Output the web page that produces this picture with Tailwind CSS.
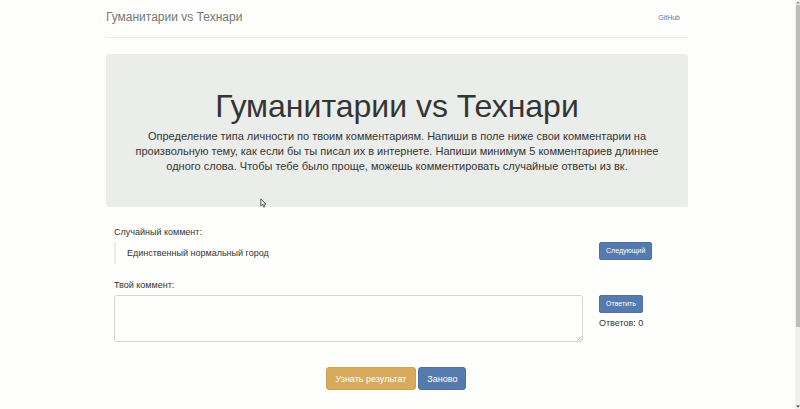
<!DOCTYPE html>
<html lang="ru">
<head>
<meta charset="utf-8">
<title>Гуманитарии vs Технари</title>
<script src="https://cdn.jsdelivr.net/npm/@tailwindcss/browser@4"></script>
</head>
<body class="flex min-h-screen bg-[#fefefd] font-['Liberation_Sans',Arial,sans-serif] text-[9px] leading-[14px] text-[#333533]">
  <div class="min-w-0 flex-1">
    <div class="mx-auto w-full max-w-[582px]">
      <header class="flex h-[38px] items-center justify-between border-b border-[#eaebea] pr-2 pb-[3px]">
        <h3 class="text-[12px] text-[#747774]">Гуманитарии vs Технари</h3>
        <nav><a href="#" class="text-[7px] text-[#557bae]">GitHub</a></nav>
      </header>
      <main>
        <section class="mt-4 rounded-[3px] bg-[#ebedeb] px-7 pt-[31px] pb-[33px] text-center">
          <h1 class="mb-[2px] text-[32px] leading-[42px]">Гуманитарии vs Технари</h1>
          <p class="text-[11px] leading-[15px]">Определение типа личности по твоим комментариям. Напиши в поле ниже свои комментарии на произвольную тему, как если бы ты писал их в интернете. Напиши минимум 5 комментариев длиннее одного слова. Чтобы тебе было проще, можешь комментировать случайные ответы из вк.</p>
        </section>
        <form>
          <section class="mt-[18px] px-2">
            <p>Случайный коммент:</p>
            <div class="mt-[3px] grid grid-cols-[1fr_89px] gap-4 -mr-2">
              <blockquote class="self-start border-l-2 border-[#eaebea] py-1 pl-[11px]">Единственный нормальный город</blockquote>
              <div><button type="button" class="h-[18px] rounded-[2px] border border-[#4c71a4] bg-[#557bae] px-[6px] text-[7px] text-white">Следующий</button></div>
            </div>
          </section>
          <section class="mt-[14px] px-2">
            <label for="comment" class="block">Твой коммент:</label>
            <div class="mt-[3px] grid grid-cols-[1fr_89px] gap-4 -mr-2">
              <div class="relative">
                <textarea id="comment" class="block h-[47px] w-full resize-none rounded-[3px] border border-[#d4d5d4] bg-[#fefefd] px-2 py-1"></textarea>
                <svg class="pointer-events-none absolute right-[1px] bottom-[1px] h-[5px] w-[5px]" viewBox="0 0 5 5" aria-hidden="true"><path d="M.5 4.5 4.5.5M3 4.5 4.5 3" stroke="#999" stroke-width=".7"/></svg>
              </div>
              <div class="flex flex-col items-start">
                <button type="button" class="h-[18px] rounded-[2px] border border-[#4c71a4] bg-[#557bae] px-[6px] text-[7px] text-white">Ответить</button>
                <p class="mt-[3px]">Ответов: 0</p>
              </div>
            </div>
          </section>
          <div class="mt-[25px] flex justify-center gap-[2px] pr-[2px]">
            <button type="button" class="h-[23px] rounded-[3px] border border-[#d0a34f] bg-[#d7ab5b] px-[9px] text-[9px] text-white">Узнать результат</button>
            <button type="reset" class="h-[23px] rounded-[3px] border border-[#4c71a4] bg-[#557bae] px-2 text-[9px] text-white">Заново</button>
          </div>
        </form>
      </main>
    </div>
  </div>
  <div class="flex w-[6px] shrink-0 flex-col items-center pl-px" aria-hidden="true">
    <svg class="h-[5px] w-[5px] bg-[#f0f0f0]" viewBox="0 0 5 5"><path d="M1 3.5 3 1.5 5 3.5Z" fill="#888"/></svg>
    <div class="w-[5px] flex-[322] border-l border-[#f0f0f0] bg-[#bcbdbc]"></div>
    <div class="w-[5px] flex-[77] bg-[#f0f0f0]"></div>
    <svg class="h-[5px] w-[5px] bg-[#f0f0f0]" viewBox="0 0 5 5"><path d="M1 1.5 3 3.5 5 1.5Z" fill="#444"/></svg>
  </div>
  <svg class="pointer-events-none absolute top-[198px] left-[260px] h-[10px] w-[7px]" viewBox="0 0 7 10" aria-hidden="true"><path d="M.8.8V8L2.5 6.5 3.7 9.2 4.8 8.7 3.7 6.1H6Z" fill="#eee" stroke="#555" stroke-width=".9"/></svg>
</body>
</html>
